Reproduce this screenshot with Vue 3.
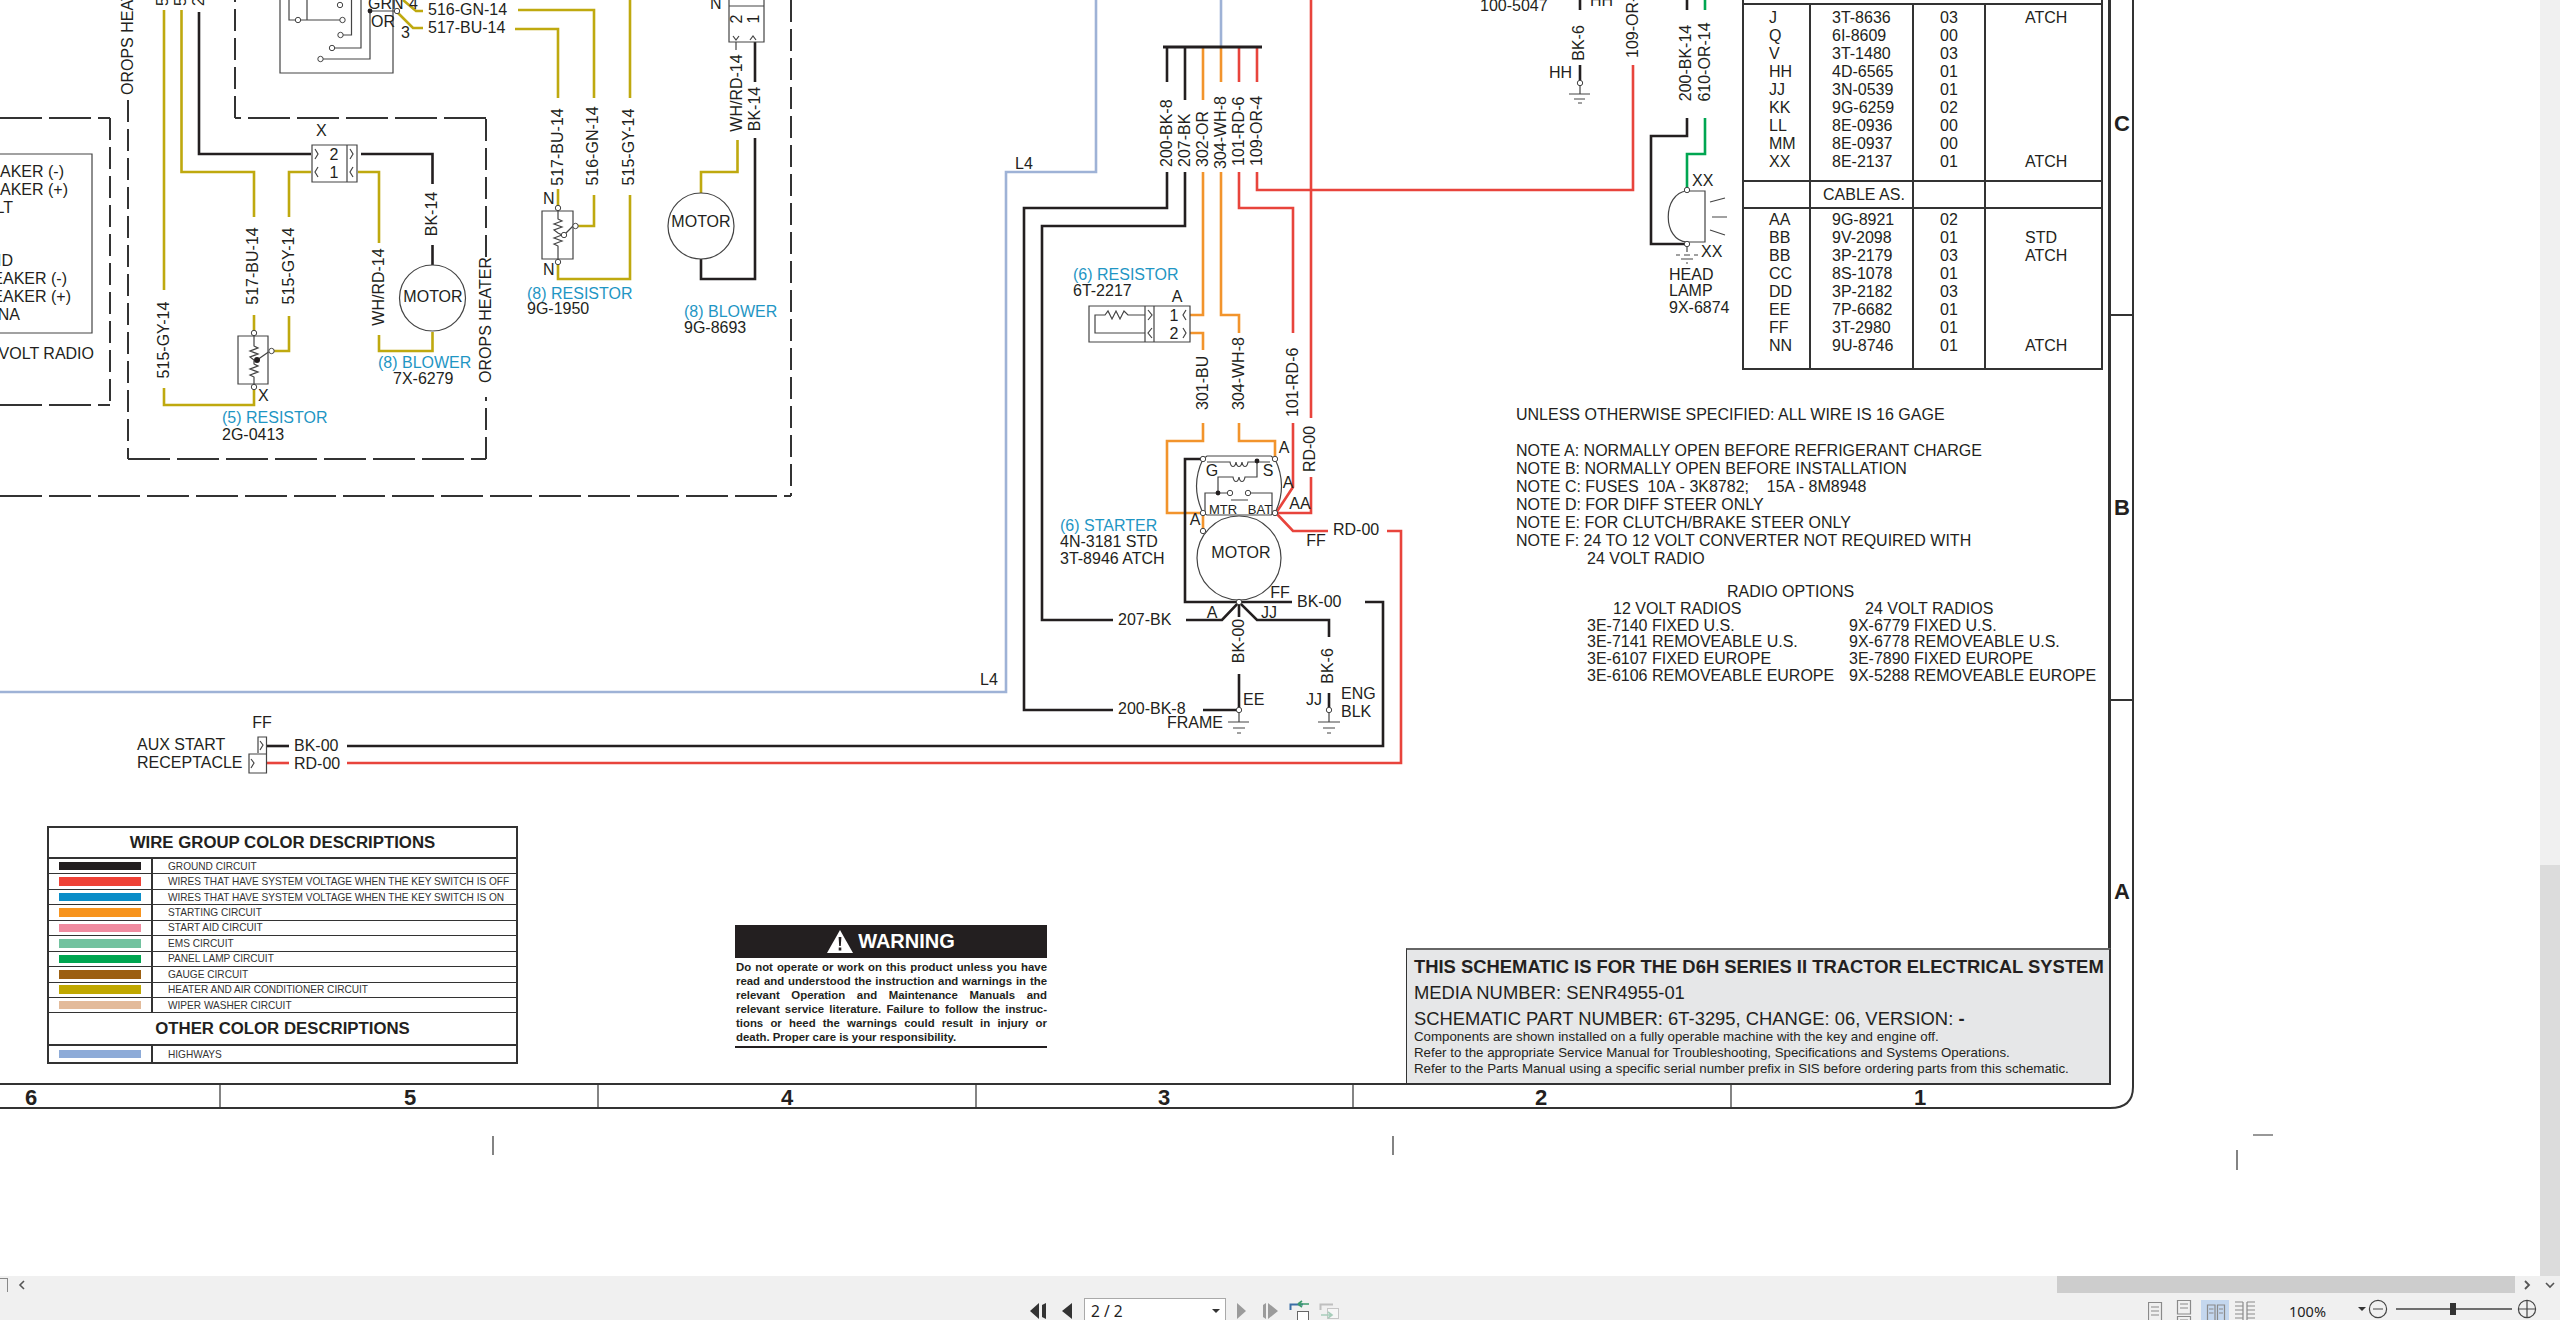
<template>
  <div class="viewer">
    <div class="doc">
      <div class="page">
        <svg class="sheet" width="2540" height="1276" viewBox="0 0 2540 1276">
          <!-- sheet frame and zone strip -->
          <path class="frame" d="M0 1084H2110V0M2109 0V1084M2133 0V1087Q2133 1108 2110 1108H0M2109 315H2133M2109 700H2133" />
          <path class="frame thin" v-for="x in zoneTicks" :key="'z' + x" :d="`M${x} 1084V1108`" />
          <text v-for="z in zones" :key="'n' + z.n" class="zone" :x="z.x" y="1105" text-anchor="middle">{{ z.n }}</text>
          <text v-for="z in rowZones" :key="'r' + z.n" class="zone" x="2122" :y="z.y" text-anchor="middle">{{ z.n }}</text>
          <path class="frame thin" d="M493 1136V1155M1393 1136V1155M2237 1150V1170M2253 1135H2273" />

          <!-- dashed group boundaries -->
          <path v-for="(d, i) in dashedH" :key="'dh' + i" class="dash long" :d="d" />
          <path v-for="(d, i) in dashedV" :key="'dv' + i" class="dash" :d="d" />
          <path class="thinline" d="M0 154H92V333H0" />

          <!-- wires -->
          <polyline v-for="(w, i) in wires" :key="'w' + i" class="wire" :class="w[0]" :points="w[1]" />
          <path class="bar" d="M1163 47H1262" />

          <!-- component symbols -->
          <path class="thinline" v-for="(p, i) in symbols" :key="'s' + i" :d="p" />
          <circle v-for="(c, i) in motors" :key="'m' + i" class="thinline" :cx="c[0]" :cy="c[1]" :r="c[2]" />
          <circle v-for="(c, i) in dots" :key="'k' + i" class="dot" :cx="c[0]" :cy="c[1]" :r="c[2] || 2.4" />
          <circle v-for="(c, i) in terminals" :key="'c' + i" class="term" :cx="c[0]" :cy="c[1]" r="2.7" />

          <!-- labels, y is the centre of the capitals -->
          <text v-for="(l, i) in labels" :key="'l' + i" class="t" :class="l[3]" :x="l[0]" :y="l[1] + 5.7">{{ l[2] }}</text>
          <text v-for="(l, i) in centered" :key="'e' + i" class="t" :class="l[3]" :x="l[0]" :y="l[1] + 5.7" text-anchor="middle">{{ l[2] }}</text>
          <text v-for="(l, i) in clipped" :key="'p' + i" class="t" :x="l[0]" :y="l[1] + 5.7" text-anchor="end">{{ l[2] }}</text>
          <text
            v-for="(l, i) in vertical"
            :key="'v' + i"
            class="t"
            :transform="`translate(${l[0] + 5.7} ${l[1]}) rotate(-90)`"
            :text-anchor="l[3] || 'middle'"
          >{{ l[2] }}</text>
        </svg>

        <div class="parts">
          <div class="parts-sec first">
            <div v-for="(col, c) in partsTop" :key="c" class="parts-col" :class="'c' + c">
              <div v-for="(v, r) in col" :key="r">{{ v }}</div>
            </div>
          </div>
          <div class="parts-sec cable">
            <div class="parts-col c0"></div>
            <div class="parts-col c1 cable-name">CABLE AS.</div>
            <div class="parts-col c2"></div>
            <div class="parts-col c3"></div>
          </div>
          <div class="parts-sec last">
            <div v-for="(col, c) in partsBottom" :key="c" class="parts-col" :class="'c' + c">
              <div v-for="(v, r) in col" :key="r">{{ v }}</div>
            </div>
          </div>
        </div>

        <div class="notes">
          <div>UNLESS OTHERWISE SPECIFIED: ALL WIRE IS 16 GAGE</div>
          <div class="spacer"></div>
          <div v-for="n in notes" :key="n">{{ n }}</div>
          <div class="note-wrap">24 VOLT RADIO</div>
          <div class="radio-title">RADIO OPTIONS</div>
          <div class="radios">
            <div>
              <div class="radio-head left">12 VOLT RADIOS</div>
              <div v-for="r in radios12" :key="r">{{ r }}</div>
            </div>
            <div>
              <div class="radio-head right">24 VOLT RADIOS</div>
              <div v-for="r in radios24" :key="r">{{ r }}</div>
            </div>
          </div>
        </div>

        <div class="legend">
          <div class="legend-title">WIRE GROUP COLOR DESCRIPTIONS</div>
          <div v-for="g in wireGroups" :key="g.name" class="legend-row">
            <span class="swatch-cell"><i class="swatch" :style="{ background: g.color }"></i></span>
            <span class="legend-name">{{ g.name }}</span>
          </div>
          <div class="legend-title other">OTHER COLOR DESCRIPTIONS</div>
          <div class="legend-row end">
            <span class="swatch-cell"><i class="swatch" style="background: #8dabd8"></i></span>
            <span class="legend-name">HIGHWAYS</span>
          </div>
        </div>

        <div class="warning">
          <div class="warning-head">
            <svg width="26" height="23" viewBox="0 0 26 23">
              <path fill="#fff" d="M13 0L26 23H0Z" />
              <path fill="#231f20" d="M11.6 7H14.4L13.8 16H12.2ZM11.7 17.5H14.3V20.5H11.7Z" />
            </svg>
            <span>WARNING</span>
          </div>
          <div v-for="(line, i) in warningLines" :key="i" class="warning-line" :class="{ tail: i === warningLines.length - 1 }">{{ line }}</div>
        </div>

        <div class="title-block">
          <div class="tb-main">THIS SCHEMATIC IS FOR THE D6H SERIES II TRACTOR ELECTRICAL SYSTEM</div>
          <div class="tb-media">MEDIA NUMBER: SENR4955-01</div>
          <div class="tb-part">SCHEMATIC PART NUMBER: 6T-3295, CHANGE: 06, VERSION: <b>-</b></div>
          <div class="tb-small">Components are shown installed on a fully operable machine with the key and engine off.</div>
          <div class="tb-small">Refer to the appropriate Service Manual for Troubleshooting, Specifications and Systems Operations.</div>
          <div class="tb-small">Refer to the Parts Manual using a specific serial number prefix in SIS before ordering parts from this schematic.</div>
        </div>
      </div>
      <div class="vscroll"><div class="vthumb"></div></div>
    </div>

    <div class="hscroll">
      <div class="hleft"><i class="hstub"></i><svg width="12" height="17" viewBox="0 0 12 17"><path d="M8 5L4 9L8 13" fill="none" stroke="#555" stroke-width="1.6" /></svg></div>
      <div class="hthumb"></div>
      <svg class="harrow" width="45" height="17" viewBox="0 0 45 17">
        <path d="M10 5L14 9L10 13" fill="none" stroke="#555" stroke-width="1.8" />
        <path d="M31 7L35 11L39 7" fill="none" stroke="#555" stroke-width="1.6" />
      </svg>
    </div>

    <div class="status">
      <svg class="pager-icons" width="42" height="22" viewBox="0 0 42 22">
        <path fill="#333" d="M0 13L9 5V21ZM12 7L16 5V21L12 19ZM32 13L42 5V21Z" />
      </svg>
      <div class="page-box"><span>2 / 2</span><i class="caret"></i></div>
      <svg class="pager-rest" width="103" height="22" viewBox="0 0 103 22">
        <path fill="#9b9b9b" d="M0 5L9 13L0 21ZM26 7L29 5V21L26 19ZM31 5L41 13L31 21Z" />
        <path d="M53.5 12V6.5H66" fill="none" stroke="#3b6ea5" stroke-width="2" />
        <rect x="60.5" y="13.5" width="11" height="10" fill="#fff" stroke="#666" />
        <path d="M61 6H72M61 6L65 3M61 6L65 9" fill="none" stroke="#3c9a6c" stroke-width="1.6" />
        <g opacity=".4">
          <path d="M83.5 12V6.5H96" fill="none" stroke="#777" stroke-width="2" />
          <rect x="90.5" y="10.5" width="11" height="10" fill="#fff" stroke="#888" />
          <path d="M84 17H95M91 14L95 17L91 20" fill="none" stroke="#3c9a6c" stroke-width="1.6" />
        </g>
      </svg>
      <div class="view-tools">
        <svg width="107" height="27" viewBox="0 0 107 27">
          <rect x="53" y="2" width="28" height="25" fill="#c4d7ee" />
          <g fill="none" stroke="#8a8a8a" stroke-width="1.2">
            <path d="M.5 4.5H13.5V22.5H.5ZM3 9H11M3 13H11M3 17H11" />
            <path d="M29.5 2.5H42.5V16H29.5ZM32 6H40M32 10H40M29.5 18.5H42.5V27H29.5ZM32 22H40" />
            <path d="M59.5 7H67V23H59.5ZM69.5 7H76.5V23H69.5ZM61 11H65.5M61 15H65.5M71 11H75M71 15H75" />
            <path d="M87 4H95M87 8H95M87 12H95M87 16H95M99 4H107M99 8H107M99 12H107M99 16H107M95 4V27M99 4V27M87 20H95M99 20H107" />
          </g>
        </svg>
        <span class="zoom-value">100%</span>
        <svg class="zoom-tools" width="190" height="22" viewBox="0 0 190 22">
          <path fill="#333" d="M3 9H11L7 13Z" />
          <g fill="none" stroke="#444" stroke-width="1.2">
            <circle cx="23" cy="11" r="8.6" />
            <path d="M18 11H28M164 11H180M172 3V19" />
            <circle cx="172" cy="11" r="8.6" />
          </g>
          <path d="M41 11H157" stroke="#444" stroke-width="1.4" />
          <rect x="95" y="5" width="6" height="12" fill="#333" />
        </svg>
      </div>
    </div>
  </div>
</template>

<script setup>
const zoneTicks = [220, 598, 976, 1353, 1731]
const zones = [
  { n: '6', x: 31 },
  { n: '5', x: 410 },
  { n: '4', x: 787 },
  { n: '3', x: 1164 },
  { n: '2', x: 1541 },
  { n: '1', x: 1920 }
]
const rowZones = [
  { n: 'C', y: 131 },
  { n: 'B', y: 515 },
  { n: 'A', y: 899 }
]

// the horizontal runs have a longer dash than the vertical ones
const dashedH = ['M128 459H486', 'M486 118H235', 'M0 118H110', 'M0 405H110', 'M0 496H791']
const dashedV = ['M128 100V459', 'M486 459V397', 'M486 257V118', 'M235 118V0', 'M110 118V405', 'M791 0V496']

// [colour class, points]
const wires = [
  // left heater group
  ['y', '164,10 164,290'],
  ['y', '164,388 164,405 254,405 254,390'],
  ['y', '181.5,10 181.5,172 254,172 254,217'],
  ['y', '254,315 254,332'],
  ['k', '199,12 199,154 311,154'],
  ['k', '361,154 432.5,154 432.5,184'],
  ['k', '432.5,245 432.5,265'],
  ['y', '311,172 289,172 289,217'],
  ['y', '289,316 289,351 274,351'],
  ['y', '358,172 379,172 379,243'],
  ['y', '379,335 379,351 432.5,351 432.5,332'],
  ['y', '403,0 416,11 423,11'],
  ['y', '397,12 413,28 423,28'],
  ['y', '518,10 594,10 594,98'],
  ['y', '515,29 558,29 558,98'],
  ['y', '630,0 630,98'],
  ['y', '594,195 594,226 578,226'],
  ['y', '558,189 558,206'],
  ['y', '630,195 630,279 558,279 558,265'],
  ['y', '737.5,140 737.5,172 701,172 701,193'],
  ['k', '755,42 755,82'],
  ['k', '755,138 755,279 701,279 701,259'],

  // highways
  ['h', '1096,0 1096,172 1006,172 1006,692 0,692'],
  ['h', '1221,0 1221,47'],

  // starter bundle
  ['k', '1167,47 1167,82'],
  ['k', '1185,47 1185,100'],
  ['o', '1203,47 1203,100'],
  ['o', '1221,47 1221,82'],
  ['r', '1239,47 1239,82'],
  ['r', '1257,47 1257,82'],
  ['k', '1167,172 1167,208 1024,208 1024,710 1113,710'],
  ['k', '1203,710 1239,710'],
  ['k', '1185,172 1185,226 1042,226 1042,620 1113,620'],
  ['k', '1186,620 1222,620 1239,602 1257,620 1329,620 1329,637'],
  ['k', '1239,602 1239,617'],
  ['k', '1239,674 1239,710'],
  ['k', '1329,693 1329,710'],
  ['o', '1203,172 1203,315 1190,315'],
  ['o', '1221,172 1221,315 1239,315 1239,333'],
  ['o', '1190,333 1203,333 1203,350'],
  ['o', '1203,423 1203,441 1167,441 1167,513 1203,513'],
  ['o', '1203,513 1203,531'],
  ['o', '1239,423 1239,441 1275,441 1275,457'],
  ['r', '1239,172 1239,208 1293,208 1293,333'],
  ['r', '1293,423 1293,487 1276,513'],
  ['r', '1257,172 1257,190 1633,190 1633,65'],
  ['r', '1311,0 1311,418'],
  ['r', '1311,477 1311,513 1276,513'],
  ['r', '1276,513 1293,531 1328,531'],
  ['r', '1387,531 1401,531 1401,763 347,763'],
  ['r', '266,763 289,763'],
  ['k', '1201,459 1185,459 1185,602 1292,602'],
  ['k', '1365,602 1383,602 1383,746 347,746'],
  ['k', '266,746 289,746'],

  // head lamp
  ['k', '1580,0 1580,10'],
  ['k', '1580,65 1580,80'],
  ['k', '1687,0 1687,10'],
  ['g', '1705,0 1705,10'],
  ['k', '1687,118 1687,136 1651,136 1651,244 1687,244'],
  ['g', '1705,118 1705,154 1687,154 1687,190']
]

const symbols = [
  // switch box at the top
  'M280 0V73H393V0',
  'M289 0V20H340M307 0V20',
  'M343 35H351.5V0M334 48H361V0M323 59H370V11H397',

  // connector X and resistor (5)
  'M312 145H357V182H312ZM347 145V182',
  'M315 149L318 154L315 159M318 167L315 172L318 177M350 149L353 154L350 159M353 167L350 172L353 177',
  'M238 336H268V384H238Z',
  'M254 336V346L258 348L250 351L258 354L250 357L254 360V364L258 366L250 369L258 372L250 375L254 377V384',
  'M268.5 352L257 360',

  // resistor (8)
  'M542 211H573V259H542Z',
  'M558 211V219L562 221L554 224L562 227L554 230L558 233L562 235L554 238L562 241L554 244L558 246V259',
  'M573 226L564 235',

  // blower connector
  'M729 0V42H764V0M729 6H764',
  'M733 36L736 40L739 36M750 40L753 36L756 40',
  'M736 42V50',

  // starter resistor
  'M1089 306H1190V342H1089ZM1145 306V342M1154 306V342',
  'M1095 325V315H1105L1108 311L1112 319L1116 311L1120 319L1124 311L1128 315H1145M1095 325V333H1145',
  'M1148 310L1152 315L1148 320M1152 328L1148 333L1152 338M1186 310L1183 315L1186 320M1183 328L1186 333L1183 338',

  // starter solenoid
  'M1203 459Q1190 486 1203 513M1275 459Q1288 486 1275 513',
  'M1203 459L1207 456H1271L1275 459M1203 513L1207 515H1271L1275 513',
  'M1207 462H1230C1231 468 1235 468 1236 462C1237 468 1241 468 1242 462C1243 468 1247 468 1248 462H1270',
  'M1257 461V477H1245C1244 483 1240 483 1239 477C1238 483 1234 483 1233 477H1218V493',
  'M1205 515V493H1228M1250 493H1272V515M1231 500H1248',

  // grounds
  'M1239 712V722M1228 722H1249M1233 728H1245M1237 733H1241',
  'M1329 712V722M1318 722H1340M1323 728H1335M1327 733H1331',
  'M1580 85V94M1569 94H1590M1574 99H1585M1578 103H1582',

  // aux start receptacle
  'M258 753V737H266.5V773H249V754H266.5',
  'M260 741L263 745L260 750M251 759L254 763L251 768',

  // head lamp
  'M1687 191H1705V242H1687M1687 191C1662 193 1662 241 1687 242',
  'M1710 202L1725 198M1712 217H1727M1710 230L1725 235',
  'M1676 255H1680M1684 255H1690M1694 255H1698M1681 259H1693M1686 263H1688M1687 247V252'
]

const motors = [
  [432.5, 298, 33],
  [701, 226, 33],
  [1239, 558, 42]
]

const dots = [
  [257, 360, 3],
  [370, 11],
  [1257, 461],
  [1218, 493]
]

const terminals = [
  [298, 20], [342.5, 20], [340, 5], [340.5, 35], [332, 48], [320.5, 59], [397, 11],
  [254, 333], [254, 387], [271.5, 351],
  [558, 208], [558, 262], [575.5, 226], [564, 235],
  [1203, 459], [1275, 459], [1203, 513], [1275, 513], [1203, 531],
  [1230, 493], [1248, 493], [1239, 602], [1239, 710], [1329, 710],
  [1580, 83], [1687, 190], [1687, 244]
]

// [x, centre y, text, class]
const labels = [
  [428, 9.5, '516-GN-14'],
  [428, 27, '517-BU-14'],
  [368, 3, 'GRN'],
  [371, 21, 'OR'],
  [409, 3, '4'],
  [401, 32, '3'],
  [222, 417, '(5) RESISTOR', 'c'],
  [222, 434, '2G-0413'],
  [378, 362, '(8) BLOWER', 'c'],
  [393, 378, '7X-6279'],
  [527, 293, '(8) RESISTOR', 'c'],
  [527, 308, '9G-1950'],
  [684, 311, '(8) BLOWER', 'c'],
  [684, 327, '9G-8693'],
  [710, 3, 'N'],
  [543, 198, 'N'],
  [543, 269, 'N'],
  [258, 395, 'X'],
  [316, 130, 'X'],
  [1015, 163, 'L4'],
  [980, 679, 'L4'],
  [1073, 274, '(6) RESISTOR', 'c'],
  [1073, 290, '6T-2217'],
  [1060, 525, '(6) STARTER', 'c'],
  [1060, 541, '4N-3181 STD'],
  [1060, 558, '3T-8946 ATCH'],
  [1118, 708, '200-BK-8'],
  [1118, 619, '207-BK'],
  [1297, 601, 'BK-00'],
  [1333, 529, 'RD-00'],
  [1167, 722, 'FRAME'],
  [1243, 699, 'EE'],
  [1306, 699, 'JJ'],
  [1341, 693, 'ENG'],
  [1341, 711, 'BLK'],
  [137, 744, 'AUX START'],
  [137, 762, 'RECEPTACLE'],
  [294, 745, 'BK-00'],
  [294, 763, 'RD-00'],
  [1480, 5, '100-5047'],
  [1590, 0, 'HH'],
  [1549, 72, 'HH'],
  [1692, 180, 'XX'],
  [1701, 251, 'XX'],
  [1669, 274, 'HEAD'],
  [1669, 290, 'LAMP'],
  [1669, 307, '9X-6874']
]

const centered = [
  [433, 296, 'MOTOR'],
  [701, 221, 'MOTOR'],
  [1241, 552, 'MOTOR'],
  [334, 154, '2'],
  [334, 172, '1'],
  [1174, 315, '1'],
  [1174, 333, '2'],
  [1177, 296, 'A'],
  [1212, 470, 'G'],
  [1268, 470, 'S'],
  [1223, 508, 'MTR', 'small'],
  [1260, 508, 'BAT', 'small'],
  [1284, 447, 'A'],
  [1288, 482, 'A'],
  [1300, 503, 'AA'],
  [1195, 519, 'A'],
  [1316, 540, 'FF'],
  [1212, 612, 'A'],
  [1269, 612, 'JJ'],
  [1280, 592, 'FF'],
  [262, 722, 'FF']
]

// cut by the left page edge
const clipped = [
  [64, 171, 'AKER (-)'],
  [68, 189, 'AKER (+)'],
  [13, 207, 'LT'],
  [13, 260, 'ID'],
  [67, 278, 'EAKER (-)'],
  [71, 296, 'EAKER (+)'],
  [20, 314, 'NA'],
  [94, 353, 'VOLT RADIO']
]

// [x centre, y, text, anchor]
const vertical = [
  [127, 95, 'OROPS HEATER', 'start'],
  [485, 320, 'OROPS HEATER'],
  [162, 6, '515-GY-14', 'start'],
  [180, 6, '517-BU-14', 'start'],
  [198, 6, '207-BK', 'start'],
  [163, 340, '515-GY-14'],
  [252, 266, '517-BU-14'],
  [288, 266, '515-GY-14'],
  [378, 287, 'WH/RD-14'],
  [431, 214, 'BK-14'],
  [557, 147, '517-BU-14'],
  [592, 146, '516-GN-14'],
  [628, 147, '515-GY-14'],
  [736, 93, 'WH/RD-14'],
  [754, 109, 'BK-14'],
  [736, 19, '2'],
  [753, 19, '1'],
  [1166, 167, '200-BK-8', 'start'],
  [1184, 167, '207-BK', 'start'],
  [1202, 167, '302-OR', 'start'],
  [1220, 169, '304-WH-8', 'start'],
  [1238, 166, '101-RD-6', 'start'],
  [1256, 166, '109-OR-4', 'start'],
  [1202, 410, '301-BU', 'start'],
  [1238, 410, '304-WH-8', 'start'],
  [1292, 417, '101-RD-6', 'start'],
  [1309, 449, 'RD-00'],
  [1238, 641, 'BK-00'],
  [1327, 666, 'BK-6'],
  [1578, 43, 'BK-6'],
  [1632, 58, '109-OR-4', 'start'],
  [1685.5, 63, '200-BK-14'],
  [1704, 62, '610-OR-14']
]

const partsTop = [
  ['J', 'Q', 'V', 'HH', 'JJ', 'KK', 'LL', 'MM', 'XX'],
  ['3T-8636', '6I-8609', '3T-1480', '4D-6565', '3N-0539', '9G-6259', '8E-0936', '8E-0937', '8E-2137'],
  ['03', '00', '03', '01', '01', '02', '00', '00', '01'],
  ['ATCH', '', '', '', '', '', '', '', 'ATCH']
]
const partsBottom = [
  ['AA', 'BB', 'BB', 'CC', 'DD', 'EE', 'FF', 'NN'],
  ['9G-8921', '9V-2098', '3P-2179', '8S-1078', '3P-2182', '7P-6682', '3T-2980', '9U-8746'],
  ['02', '01', '03', '01', '03', '01', '01', '01'],
  ['', 'STD', 'ATCH', '', '', '', '', 'ATCH']
]

const notes = [
  'NOTE A: NORMALLY OPEN BEFORE REFRIGERANT CHARGE',
  'NOTE B: NORMALLY OPEN BEFORE INSTALLATION',
  'NOTE C: FUSES  10A - 3K8782;    15A - 8M8948',
  'NOTE D: FOR DIFF STEER ONLY',
  'NOTE E: FOR CLUTCH/BRAKE STEER ONLY',
  'NOTE F: 24 TO 12 VOLT CONVERTER NOT REQUIRED WITH'
]
const radios12 = ['3E-7140 FIXED U.S.', '3E-7141 REMOVEABLE U.S.', '3E-6107 FIXED EUROPE', '3E-6106 REMOVEABLE EUROPE']
const radios24 = ['9X-6779 FIXED U.S.', '9X-6778 REMOVEABLE U.S.', '3E-7890 FIXED EUROPE', '9X-5288 REMOVEABLE EUROPE']

const wireGroups = [
  { color: '#231f20', name: 'GROUND CIRCUIT' },
  { color: '#ef4136', name: 'WIRES THAT HAVE SYSTEM VOLTAGE WHEN THE KEY SWITCH IS OFF' },
  { color: '#0a8dc8', name: 'WIRES THAT HAVE SYSTEM VOLTAGE WHEN THE KEY SWITCH IS ON' },
  { color: '#f7941e', name: 'STARTING CIRCUIT' },
  { color: '#f08ba0', name: 'START AID CIRCUIT' },
  { color: '#72c29f', name: 'EMS CIRCUIT' },
  { color: '#00a651', name: 'PANEL LAMP CIRCUIT' },
  { color: '#9c5f12', name: 'GAUGE CIRCUIT' },
  { color: '#c0a800', name: 'HEATER AND AIR CONDITIONER CIRCUIT' },
  { color: '#e3bb9b', name: 'WIPER WASHER CIRCUIT' }
]

const warningLines = [
  'Do not operate or work on this product unless you have',
  'read and understood the instruction and warnings in the',
  'relevant Operation and Maintenance Manuals and',
  'relevant service literature. Failure to follow the instruc-',
  'tions or heed the warnings could result in injury or',
  'death. Proper care is your responsibility.'
]
</script>

<style>
html,
body {
  margin: 0;
  background: #fff;
}
</style>

<style scoped>
.viewer {
  display: flex;
  flex-direction: column;
  width: 2560px;
  height: 1320px;
  overflow: hidden;
  background: #fff;
  font-family: "Liberation Sans", Arial, sans-serif;
  color: #231f20;
}
.doc {
  display: flex;
  height: 1276px;
}
.page {
  position: relative;
  width: 2540px;
  height: 1276px;
  overflow: hidden;
}
.sheet {
  display: block;
}

/* drawing */
.frame {
  fill: none;
  stroke: #333;
  stroke-width: 2;
}
.frame.thin {
  stroke-width: 1.2;
}
.dash {
  fill: none;
  stroke: #333;
  stroke-width: 2;
  stroke-dasharray: 22 7;
}
.dash.long {
  stroke-dasharray: 42 7;
}
.wire {
  fill: none;
  stroke-width: 2.6;
}
.k { stroke: #231f20; }
.y { stroke: #bfa90f; }
.r { stroke: #e8443c; }
.o { stroke: #f2942c; }
.g { stroke: #00a651; }
.h { stroke: #9eb2d6; }
.bar {
  stroke: #231f20;
  stroke-width: 3;
}
.thinline {
  fill: none;
  stroke: #444;
  stroke-width: 1.2;
}
.dot {
  fill: #231f20;
}
.term {
  fill: #fff;
  stroke: #444;
  stroke-width: 1;
}
.t {
  font-size: 16px;
  fill: #231f20;
}
.t.c {
  fill: #1f96c4;
}
.t.small {
  font-size: 13px;
}
.zone {
  font-size: 22px;
  font-weight: 700;
  fill: #231f20;
}

/* parts table */
.parts {
  position: absolute;
  left: 1742px;
  top: 0;
  width: 361px;
  font-size: 16px;
  line-height: 18px;
  border-left: 2px solid #333;
  border-right: 2px solid #333;
  border-bottom: 2px solid #333;
  box-sizing: border-box;
}
.parts-sec {
  display: grid;
  grid-template-columns: 67px 103px 72px 1fr;
  border-top: 2px solid #333;
}
.parts-sec.first {
  margin-top: 3px;
  height: 175px;
}
.parts-sec.cable {
  height: 25px;
}
.parts-sec.last {
  height: 159px;
}
.parts-col {
  border-right: 2px solid #333;
  box-sizing: border-box;
}
.parts-col:last-child {
  border-right: 0;
}
.parts-col > div {
  height: 18px;
  white-space: nowrap;
}
.first .parts-col {
  padding-top: 4px;
}
.last .parts-col {
  padding-top: 2px;
}
.c0 { padding-left: 25px; }
.c1 { padding-left: 21px; }
.c2 { padding-left: 26px; }
.c3 { padding-left: 39px; }
.cable-name {
  padding-left: 12px;
  line-height: 25px;
}

/* notes */
.notes {
  position: absolute;
  left: 1516px;
  top: 406px;
  font-size: 16px;
  line-height: 18px;
  white-space: pre;
}
.spacer {
  height: 18px;
}
.note-wrap {
  padding-left: 71px;
}
.radio-title {
  margin: 15px 0 0 211px;
}
.radios {
  display: grid;
  grid-template-columns: 262px auto;
  margin-left: 71px;
  line-height: 16.67px;
}
.radio-head.left {
  padding-left: 26px;
}
.radio-head.right {
  padding-left: 16px;
}

/* colour legend */
.legend {
  position: absolute;
  left: 47px;
  top: 826px;
  width: 471px;
  box-sizing: border-box;
  border: 2px solid #333;
}
.legend-title {
  height: 29px;
  line-height: 29px;
  text-align: center;
  font-size: 16.8px;
  font-weight: 700;
  border-bottom: 2px solid #333;
}
.legend-title.other {
  height: 31px;
  line-height: 31px;
}
.legend-row {
  display: grid;
  grid-template-columns: 104px 1fr;
  box-sizing: border-box;
  height: 15.45px;
  align-items: center;
  border-bottom: 1.5px solid #333;
}
.legend-row.end {
  border-bottom: 0;
}
.swatch-cell {
  display: flex;
  align-items: center;
  height: 100%;
  padding-left: 10px;
  border-right: 2px solid #333;
  box-sizing: border-box;
}
.swatch {
  display: block;
  width: 82px;
  height: 8.5px;
}
.legend-name {
  padding-left: 15px;
  font-size: 10.1px;
  white-space: nowrap;
  color: #333;
}

/* warning */
.warning {
  position: absolute;
  left: 735px;
  top: 925px;
  width: 312px;
  border-bottom: 2px solid #231f20;
  padding-bottom: 2px;
}
.warning-head {
  display: flex;
  align-items: center;
  justify-content: center;
  gap: 5px;
  height: 33px;
  margin-bottom: 2px;
  background: #231f20;
  color: #fff;
  font-size: 20px;
  font-weight: 700;
}
.warning-line {
  padding-left: 1px;
  font-size: 11.4px;
  font-weight: 700;
  line-height: 14px;
  text-align: justify;
  text-align-last: justify;
}
.warning-line.tail {
  text-align-last: left;
}

/* title block */
.title-block {
  position: absolute;
  left: 1406px;
  top: 948px;
  width: 705px;
  height: 137px;
  box-sizing: border-box;
  padding: 4px 0 0 7px;
  background: #e6e7e8;
  border: 2px solid #333;
  border-top-color: #666;
  border-left-width: 1px;
  white-space: nowrap;
}
.tb-main {
  font-size: 18.4px;
  font-weight: 700;
  line-height: 26px;
}
.tb-media {
  font-size: 18.4px;
  line-height: 26px;
}
.tb-part {
  margin-top: 3px;
  font-size: 18.4px;
  line-height: 20px;
}
.tb-small {
  font-size: 13.3px;
  line-height: 16px;
}

/* scrollbars */
.vscroll {
  width: 20px;
  height: 1276px;
  background: #f0f0f0;
}
.vthumb {
  margin-top: 865px;
  height: 411px;
  background: #dcdcdc;
}
.hscroll {
  display: flex;
  height: 17px;
  background: #f0f0f0;
}
.hleft {
  display: flex;
  width: 2057px;
  align-items: flex-start;
}
.hstub {
  display: block;
  width: 8px;
  height: 14px;
  margin-top: 2px;
  border-right: 1px solid #888;
  border-top: 1px solid #888;
  box-sizing: border-box;
}
.hleft svg {
  margin-left: 8px;
}
.hthumb {
  width: 458px;
  background: #cdcdcd;
}
.harrow {
  display: block;
}

/* status bar */
.status {
  display: flex;
  align-items: flex-start;
  height: 27px;
  padding-top: 5px;
  box-sizing: border-box;
  overflow: hidden;
  background: #f0f0f0;
  font-family: "Noto Sans", "Liberation Sans", sans-serif;
  color: #222;
}
.pager-icons {
  margin-left: 1030px;
}
.pager-rest {
  margin-left: 11px;
}
.page-box {
  display: flex;
  align-items: center;
  justify-content: space-between;
  box-sizing: border-box;
  width: 142px;
  height: 27px;
  margin-left: 12px;
  padding: 0 5px 2px 6px;
  background: #fff;
  border: 1px solid #a9a9a9;
  font-size: 15.5px;
}
.caret {
  display: block;
  border-top: 4px solid #333;
  border-left: 4px solid transparent;
  border-right: 4px solid transparent;
}
.view-tools {
  display: flex;
  align-items: flex-start;
  margin-left: 808px;
}
.zoom-value {
  margin-left: 34px;
  font-size: 14.5px;
  line-height: 26px;
  width: 38px;
}
.zoom-tools {
  margin-left: 28px;
}
</style>
